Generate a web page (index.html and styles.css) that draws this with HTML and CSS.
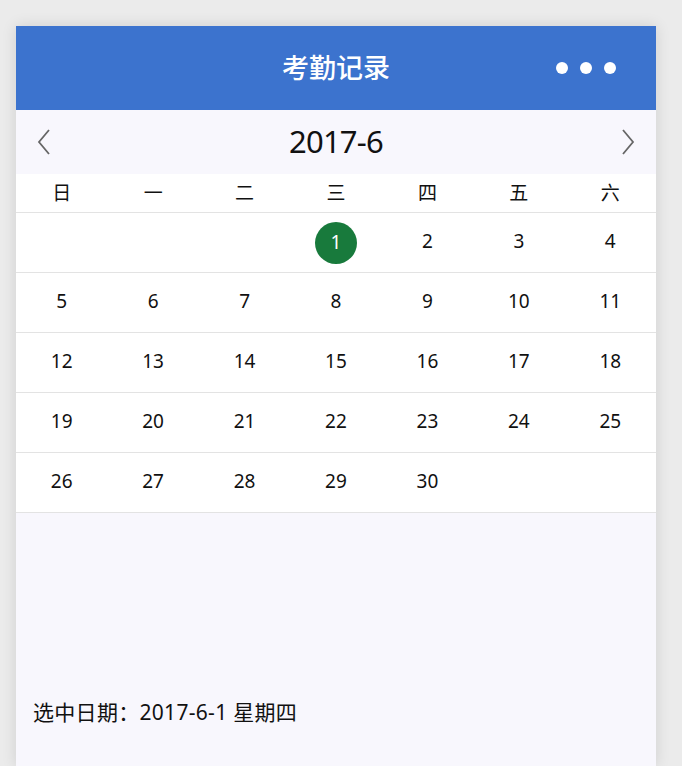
FILE: index.html
```html
<!DOCTYPE html>
<html lang="zh-CN">
<head>
<meta charset="utf-8">
<title>考勤记录</title>
<link rel="stylesheet" href="styles.css">
</head>
<body>
<div class="card">
  <header class="topbar">
    <h1 class="title">考勤记录</h1>
    <div class="more"><span></span><span></span><span></span></div>
  </header>
  <div class="monthnav">
    <svg class="chev" width="16" height="28" viewBox="0 0 16 28"><path d="M13 2 L3 14 L13 26" fill="none" stroke="#666" stroke-width="1.8"/></svg>
    <div class="month">2017-6</div>
    <svg class="chev" width="16" height="28" viewBox="0 0 16 28"><path d="M3 2 L13 14 L3 26" fill="none" stroke="#666" stroke-width="1.8"/></svg>
  </div>
  <div class="weekdays">
    <div>日</div><div>一</div><div>二</div><div>三</div><div>四</div><div>五</div><div>六</div>
  </div>
  <div class="grid">
    <div class="row"><div></div><div></div><div></div><div><span class="sel">1</span></div><div>2</div><div>3</div><div>4</div></div>
    <div class="row"><div>5</div><div>6</div><div>7</div><div>8</div><div>9</div><div>10</div><div>11</div></div>
    <div class="row"><div>12</div><div>13</div><div>14</div><div>15</div><div>16</div><div>17</div><div>18</div></div>
    <div class="row"><div>19</div><div>20</div><div>21</div><div>22</div><div>23</div><div>24</div><div>25</div></div>
    <div class="row"><div>26</div><div>27</div><div>28</div><div>29</div><div>30</div><div></div><div></div></div>
  </div>
  <div class="footer">
    <p class="selected">选中日期：2017-6-1 星期四</p>
  </div>
</div>
</body>
</html>
```
FILE: styles.css
```css
html, body {
  margin: 0;
  padding: 0;
  background: #ebebeb;
  height: 100%;
  overflow: hidden;
}
body {
  font-family: "Noto Sans", "Noto Sans CJK SC", sans-serif;
  color: #111;
  padding-top: 26px;
}
.card {
  width: 640px;
  margin-left: 16px;
  height: 740px;
  background: #f8f7fd;
  box-shadow: 0 0 14px rgba(0,0,0,0.12);
  display: flex;
  flex-direction: column;
}
.topbar {
  height: 84px;
  background: #3c73ce;
  display: flex;
  align-items: center;
  justify-content: center;
  position: relative;
}
.title {
  margin: 0 0 4px 0;
  color: #fff;
  font-size: 27px;
  line-height: 1;
  font-weight: 500;
  font-family: "Noto Sans CJK SC", sans-serif;
}
.more {
  position: absolute;
  right: 40px;
  top: 36px;
  display: flex;
  gap: 12px;
}
.more span {
  width: 12px;
  height: 12px;
  border-radius: 50%;
  background: #fff;
}
.monthnav {
  height: 64px;
  display: flex;
  align-items: center;
  justify-content: space-between;
  padding: 0 20px 0 20px;
}
.month {
  font-size: 31px;
  line-height: 1;
  color: #111;
  letter-spacing: -0.8px;
  padding-bottom: 2px;
}
.weekdays, .row {
  display: grid;
  grid-template-columns: repeat(7, 1fr);
  background: #fff;
}
.weekdays {
  height: 38px;
  align-items: center;
  font-size: 19px;
  font-family: "Noto Sans CJK SC", sans-serif;
  border-bottom: 1px solid #e3e3e3;
}
.weekdays div {
  line-height: 1;
  padding-bottom: 4px;
}
.weekdays div, .row div {
  text-align: center;
}
.row {
  height: 59px;
  align-items: center;
  font-size: 19px;
  border-bottom: 1px solid #e3e3e3;
}
.row div {
  line-height: 1;
  padding-bottom: 2px;
}
.sel {
  display: inline-flex;
  width: 42px;
  height: 42px;
  border-radius: 50%;
  background: #187a3c;
  color: #fff;
  align-items: center;
  justify-content: center;
  margin-bottom: -2px;
  vertical-align: middle;
}
.footer {
  flex: 1;
  display: flex;
  align-items: flex-end;
}
.selected {
  margin: 0 0 40px 17px;
  font-size: 21px;
  letter-spacing: 0.3px;
  font-family: "Noto Sans", "Noto Sans CJK SC", sans-serif;
}
```
